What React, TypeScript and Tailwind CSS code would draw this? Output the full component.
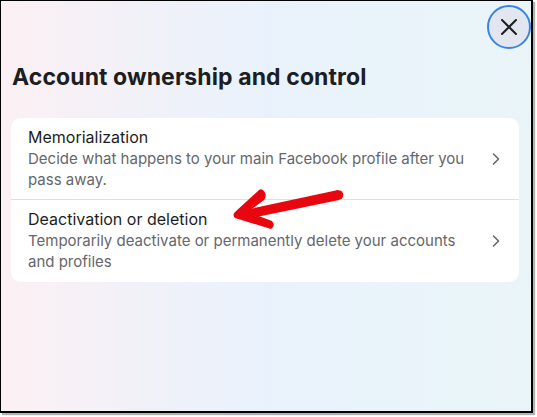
import React from 'react';

const font = { fontFamily: 'Inter, "Noto Sans", "Liberation Sans", sans-serif' };

const items = [
  {
    title: 'Memorialization',
    desc: 'Decide what happens to your main Facebook profile after you pass away.',
  },
  {
    title: 'Deactivation or deletion',
    desc: 'Temporarily deactivate or permanently delete your accounts and profiles',
  },
];

const Chevron = () => (
  <svg width="10" height="14" viewBox="0 0 10 14" fill="none">
    <path d="M2.5 2 L7.5 7 L2.5 12" stroke="#65676b" strokeWidth="1.6" strokeLinecap="round" strokeLinejoin="round" />
  </svg>
);

const App: React.FC = () => {
  return (
    <div className="w-[537px] h-[417px] bg-white" style={font}>
      <div className="relative w-[533px] h-[413px] overflow-hidden border-l border-t border-r-2 border-b-2 border-black shadow-[2px_2px_1px_rgba(0,0,0,0.3)] bg-gradient-to-r from-[#fbf0f4] via-[#e9f2fc] to-[#eaf5f8]">
        <div className="flex justify-end pt-[4px] pr-[0px]">
          <button className="w-[44px] h-[44px] rounded-full bg-[#e2e6ee] border-2 border-[#3b82e6] flex items-center justify-center">
            <svg width="18" height="18" viewBox="0 0 18 18">
              <path d="M2 2 L16 16 M16 2 L2 16" stroke="#1c1e21" strokeWidth="2" strokeLinecap="round" />
            </svg>
          </button>
        </div>
        <h1 className="ml-[11px] mt-[13px] text-[23px] leading-[30px] font-bold text-[#1c1e21] tracking-[0.1px]">
          Account ownership and control
        </h1>
        <div className="ml-[10px] mt-[26px] w-[508px] bg-white rounded-[10px]">
          {items.map((it, i) => (
            <div key={it.title} className={`flex items-center pl-[17px] pr-[18px] ${i === 0 ? 'pt-[9px] pb-[9px] border-b border-[#dcdfe4]' : 'pt-[9px] pb-[10px]'}`}>
              <div className="flex-1 pr-[20px]">
                <div className="text-[16px] leading-[21px] font-normal text-[#1c1e21]">{it.title}</div>
                <div className="text-[15px] leading-[21px] text-[#65676b]">{it.desc}</div>
              </div>
              <Chevron />
            </div>
          ))}
        </div>
        <svg className="absolute left-0 top-0 pointer-events-none" width="533" height="413" viewBox="0 0 533 413">
          <path d="M337 189 L244 209 L246 218 L338 199 Z" fill="#e8070f" />
          <circle cx="337.5" cy="194" r="4.8" fill="#e8070f" />
          <path d="M262 189 Q267 194 263 199 L247 211 L271 220 Q275 225 270 228 L234 217 Q231 214 234 211 L257 190 Q259 187 262 189 Z" fill="#e8070f" />
        </svg>
      </div>
    </div>
  );
};

export default App;
